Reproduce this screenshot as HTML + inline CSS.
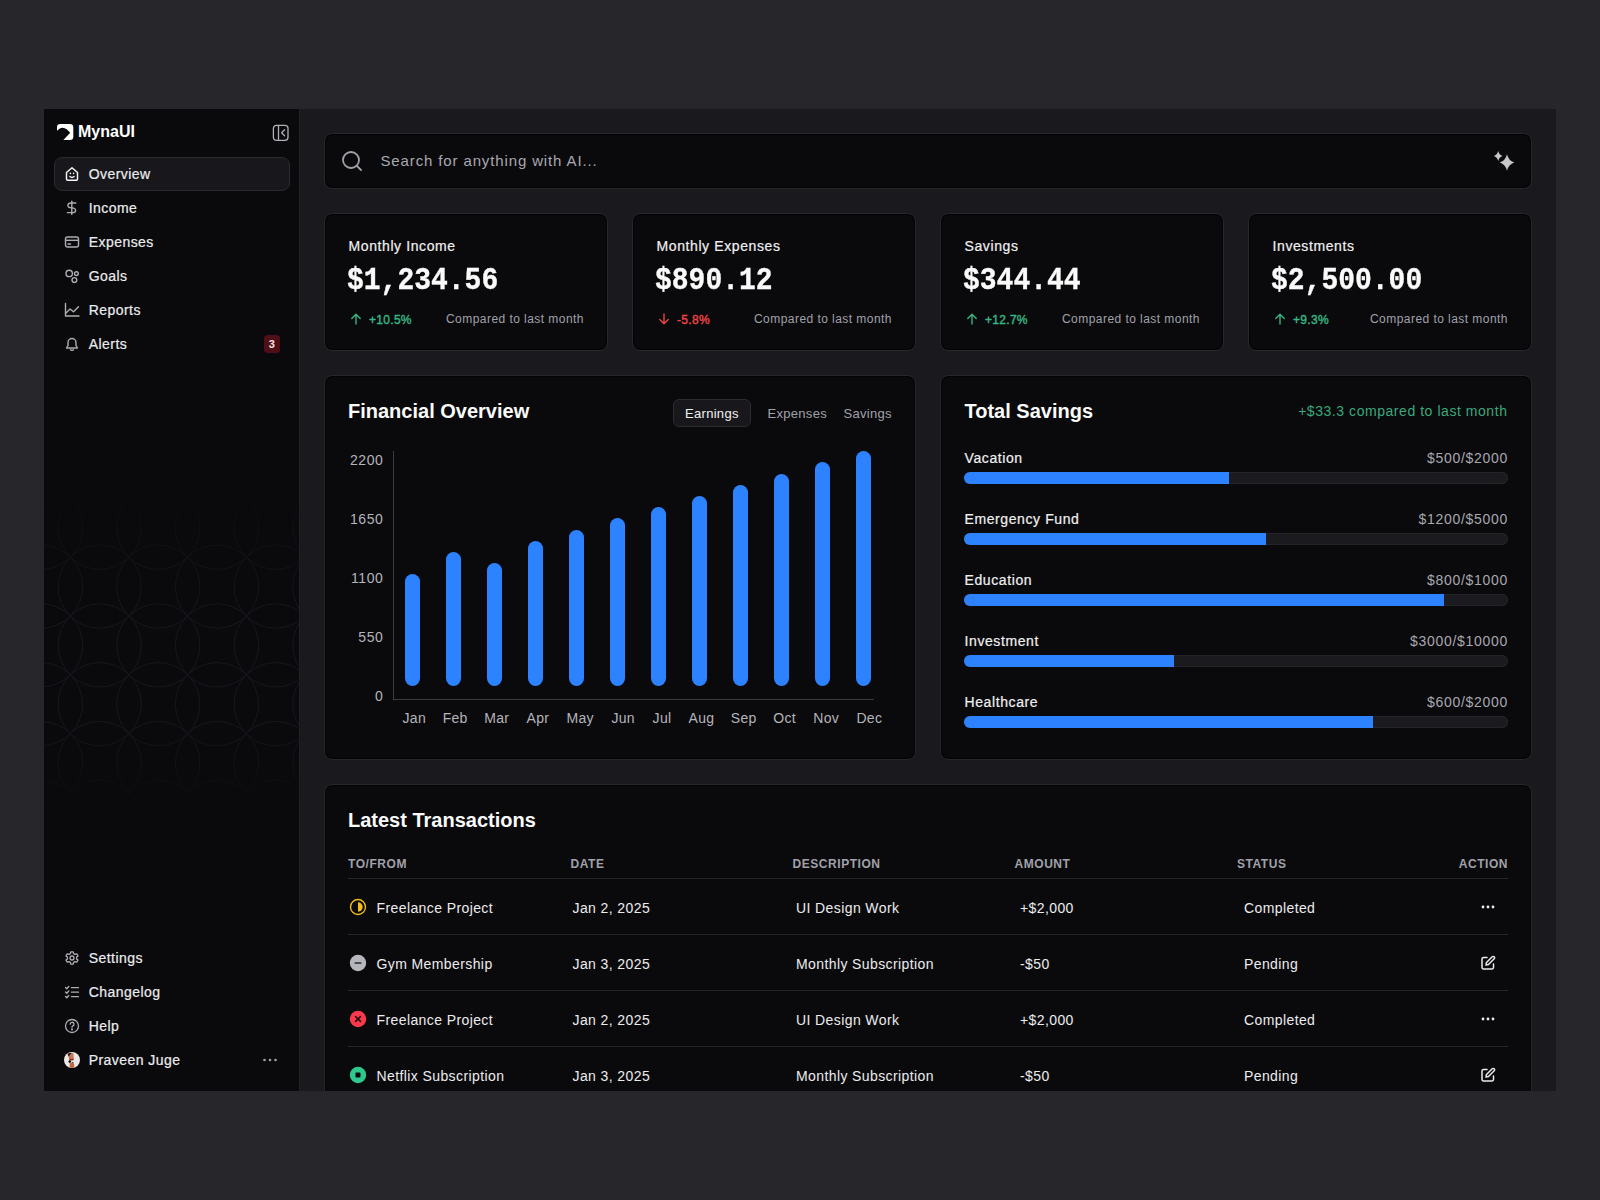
<!DOCTYPE html>
<html><head><meta charset="utf-8">
<style>
html,body{margin:0;padding:0;}
body{width:1600px;height:1200px;overflow:hidden;background:#26262b;position:relative;font-family:"Liberation Sans",sans-serif;color:#f4f4f5;}
.frame{position:absolute;left:0;top:0;width:1600px;height:1200px;clip-path:inset(109px 44px 109px 44px);}
.abs{position:absolute;}
.t{position:absolute;white-space:nowrap;line-height:1;}
.mono{font-family:"Liberation Mono",monospace;}
.side{position:absolute;left:44px;top:109px;width:255px;height:982px;background:#0a0a0d;border-right:1px solid #1f1f23;}
.main{position:absolute;left:300px;top:109px;width:1256px;height:982px;background:#1a1a1e;}
.card{position:absolute;box-sizing:border-box;background:#0a0a0c;border:1px solid #27272b;border-radius:8px;box-shadow:inset 0 0 1px 1px #040406;}
.nav{font-size:14px;color:#ececef;letter-spacing:0.45px;-webkit-text-stroke:0.2px #ececef;}
.med{-webkit-text-stroke:0.2px currentColor;}
.ico{position:absolute;}
</style></head>
<body>
<div class="frame">
  <div class="side"></div>
  <div class="main"></div>

  <svg class="abs" style="left:44px;top:0px" width="255" height="1200" viewBox="44 0 255 1200">
    <defs><linearGradient id="fade" x1="0" y1="0" x2="0" y2="1200" gradientUnits="userSpaceOnUse">
      <stop offset="0.3958" stop-color="#fff" stop-opacity="0"/>
      <stop offset="0.5083" stop-color="#fff" stop-opacity="1"/>
      <stop offset="0.6042" stop-color="#fff" stop-opacity="1"/>
      <stop offset="0.6792" stop-color="#fff" stop-opacity="0"/>
    </linearGradient>
    <mask id="m"><rect x="44" y="0" width="255" height="1200" fill="url(#fade)"/></mask></defs>
    <g mask="url(#m)" fill="none" stroke="#17181f" stroke-width="1"><circle cx="41.0" cy="410.2" r="41.6"/><circle cx="99.7" cy="410.2" r="41.6"/><circle cx="158.3" cy="410.2" r="41.6"/><circle cx="217.0" cy="410.2" r="41.6"/><circle cx="275.7" cy="410.2" r="41.6"/><circle cx="334.4" cy="410.2" r="41.6"/><circle cx="41.0" cy="469.0" r="41.6"/><circle cx="99.7" cy="469.0" r="41.6"/><circle cx="158.3" cy="469.0" r="41.6"/><circle cx="217.0" cy="469.0" r="41.6"/><circle cx="275.7" cy="469.0" r="41.6"/><circle cx="334.4" cy="469.0" r="41.6"/><circle cx="41.0" cy="527.8" r="41.6"/><circle cx="99.7" cy="527.8" r="41.6"/><circle cx="158.3" cy="527.8" r="41.6"/><circle cx="217.0" cy="527.8" r="41.6"/><circle cx="275.7" cy="527.8" r="41.6"/><circle cx="334.4" cy="527.8" r="41.6"/><circle cx="41.0" cy="586.6" r="41.6"/><circle cx="99.7" cy="586.6" r="41.6"/><circle cx="158.3" cy="586.6" r="41.6"/><circle cx="217.0" cy="586.6" r="41.6"/><circle cx="275.7" cy="586.6" r="41.6"/><circle cx="334.4" cy="586.6" r="41.6"/><circle cx="41.0" cy="645.4" r="41.6"/><circle cx="99.7" cy="645.4" r="41.6"/><circle cx="158.3" cy="645.4" r="41.6"/><circle cx="217.0" cy="645.4" r="41.6"/><circle cx="275.7" cy="645.4" r="41.6"/><circle cx="334.4" cy="645.4" r="41.6"/><circle cx="41.0" cy="704.2" r="41.6"/><circle cx="99.7" cy="704.2" r="41.6"/><circle cx="158.3" cy="704.2" r="41.6"/><circle cx="217.0" cy="704.2" r="41.6"/><circle cx="275.7" cy="704.2" r="41.6"/><circle cx="334.4" cy="704.2" r="41.6"/><circle cx="41.0" cy="763.0" r="41.6"/><circle cx="99.7" cy="763.0" r="41.6"/><circle cx="158.3" cy="763.0" r="41.6"/><circle cx="217.0" cy="763.0" r="41.6"/><circle cx="275.7" cy="763.0" r="41.6"/><circle cx="334.4" cy="763.0" r="41.6"/><circle cx="41.0" cy="821.8" r="41.6"/><circle cx="99.7" cy="821.8" r="41.6"/><circle cx="158.3" cy="821.8" r="41.6"/><circle cx="217.0" cy="821.8" r="41.6"/><circle cx="275.7" cy="821.8" r="41.6"/><circle cx="334.4" cy="821.8" r="41.6"/><circle cx="41.0" cy="880.6" r="41.6"/><circle cx="99.7" cy="880.6" r="41.6"/><circle cx="158.3" cy="880.6" r="41.6"/><circle cx="217.0" cy="880.6" r="41.6"/><circle cx="275.7" cy="880.6" r="41.6"/><circle cx="334.4" cy="880.6" r="41.6"/><circle cx="41.0" cy="939.4" r="41.6"/><circle cx="99.7" cy="939.4" r="41.6"/><circle cx="158.3" cy="939.4" r="41.6"/><circle cx="217.0" cy="939.4" r="41.6"/><circle cx="275.7" cy="939.4" r="41.6"/><circle cx="334.4" cy="939.4" r="41.6"/></g>
  </svg>
  <svg class="ico" style="left:57px;top:124.3px" width="17" height="17" viewBox="0 0 17 17">
    <path d="M3.3 0 H12.9 A3.4 3.4 0 0 1 16.3 3.4 V12.8 A3.3 3.3 0 0 1 13 16.1 H6.4 L13.2 8.7 C10.6 5.4 6.8 2.3 2.8 4.4 L0 6.7 V3.3 A3.3 3.3 0 0 1 3.3 0 Z" fill="#fff"/>
  </svg>
<div class="t" style="left:78px;top:124.26px;font-size:16px;font-weight:700;color:#fff;">MynaUI</div>
  <svg class="ico" style="left:272px;top:123.5px" width="17" height="18" viewBox="0 0 17 18" fill="none" stroke="#b0b0b6" stroke-width="1.3" stroke-linecap="round" stroke-linejoin="round">
    <rect x="1.4" y="1.3" width="14.6" height="15" rx="3"/>
    <line x1="6.5" y1="1.3" x2="6.5" y2="16.3"/>
    <path d="M12.6 5.8 L9.6 8.8 L12.6 11.8"/>
  </svg>
  <div class="abs" style="left:54px;top:157px;width:236px;height:34px;box-sizing:border-box;background:#18181c;border:1px solid #2a2a2f;border-radius:8px;"></div>
  <svg class="ico" style="left:64px;top:166px" width="16" height="16" viewBox="0 0 16 16" fill="none" stroke="#f4f4f5" stroke-width="1.5" stroke-linejoin="round">
    <path d="M2.5 6.5 L8 1.8 L13.5 6.5 V13 A1.2 1.2 0 0 1 12.3 14.2 H3.7 A1.2 1.2 0 0 1 2.5 13 Z"/>
    <path d="M5.9 10.5 Q8 12.3 10.1 10.5" stroke-linecap="round" stroke-width="1.4"/>
    <circle cx="6.4" cy="7.4" r="0.8" fill="#f4f4f5" stroke="none"/><circle cx="9.6" cy="7.4" r="0.8" fill="#f4f4f5" stroke="none"/></svg>
  <div class="t nav" style="left:88.7px;top:167.15px;">Overview</div>
  <svg class="ico" style="left:64px;top:200px" width="16" height="16" viewBox="0 0 16 16" fill="none" stroke="#adadb3" stroke-width="1.4" stroke-linecap="round">
    <path d="M11.8 3 H7.2 Q3.9 3 3.9 5.4 Q3.9 7.6 7.8 7.9 Q11.6 8.2 11.6 10.4 Q11.6 12.6 8.2 12.6 H3.4"/>
    <line x1="7.8" y1="1.3" x2="7.8" y2="14.4"/></svg>
  <div class="t nav" style="left:88.7px;top:201.15px;">Income</div>
  <svg class="ico" style="left:64px;top:234px" width="16" height="16" viewBox="0 0 16 16" fill="none" stroke="#adadb3" stroke-width="1.4">
    <rect x="1.5" y="3" width="13" height="10" rx="2"/>
    <line x1="1.5" y1="6.3" x2="14.5" y2="6.3"/>
    <line x1="4" y1="10" x2="6.5" y2="10" stroke-linecap="round"/></svg>
  <div class="t nav" style="left:88.7px;top:235.15px;">Expenses</div>
  <svg class="ico" style="left:64px;top:268px" width="16" height="16" viewBox="0 0 16 16" fill="none" stroke="#adadb3" stroke-width="1.4">
    <circle cx="5.2" cy="5.4" r="3.2"/>
    <circle cx="12.4" cy="5.6" r="1.9"/>
    <circle cx="10.4" cy="12" r="2.4"/></svg>
  <div class="t nav" style="left:88.7px;top:269.15px;">Goals</div>
  <svg class="ico" style="left:64px;top:302px" width="16" height="16" viewBox="0 0 16 16" fill="none" stroke="#adadb3" stroke-width="1.4" stroke-linecap="round" stroke-linejoin="round">
    <path d="M1.5 1.5 V14 H15"/>
    <path d="M1.5 11.5 L6 7 L9.5 9.8 L14.5 4.8"/></svg>
  <div class="t nav" style="left:88.7px;top:303.15px;">Reports</div>
  <svg class="ico" style="left:64px;top:336px" width="16" height="16" viewBox="0 0 16 16" fill="none" stroke="#adadb3" stroke-width="1.4" stroke-linejoin="round">
    <path d="M4 6.5 A4 4 0 0 1 12 6.5 V9.5 L13.5 12 H2.5 L4 9.5 Z"/>
    <path d="M6.3 13.2 A1.8 1.8 0 0 0 9.7 13.2"/></svg>
  <div class="t nav" style="left:88.7px;top:337.15px;">Alerts</div>
  <svg class="ico" style="left:64px;top:950.3px" width="16" height="16" viewBox="0 0 16 16" fill="none" stroke="#adadb3" stroke-width="1.3" stroke-linejoin="round">
    <path d="M6.8 1.8 H9.2 L9.6 3.6 L11 4.4 L12.8 3.8 L14 5.9 L12.6 7.1 V8.9 L14 10.1 L12.8 12.2 L11 11.6 L9.6 12.4 L9.2 14.2 H6.8 L6.4 12.4 L5 11.6 L3.2 12.2 L2 10.1 L3.4 8.9 V7.1 L2 5.9 L3.2 3.8 L5 4.4 L6.4 3.6 Z"/>
    <circle cx="8" cy="8" r="2"/></svg>
  <div class="t nav" style="left:88.7px;top:951.45px;">Settings</div>
  <svg class="ico" style="left:64px;top:984.3px" width="16" height="16" viewBox="0 0 16 16" fill="none" stroke="#adadb3" stroke-width="1.3" stroke-linecap="round" stroke-linejoin="round">
    <path d="M1.5 3.5 L2.8 4.8 L4.8 2.5"/><path d="M1.5 8 L2.8 9.3 L4.8 7"/><path d="M1.5 12.5 L2.8 13.8 L4.8 11.5"/>
    <line x1="7.5" y1="3.7" x2="14.5" y2="3.7"/><line x1="7.5" y1="8.2" x2="14.5" y2="8.2"/><line x1="7.5" y1="12.7" x2="14.5" y2="12.7"/></svg>
  <div class="t nav" style="left:88.7px;top:985.45px;">Changelog</div>
  <svg class="ico" style="left:64px;top:1018.3px" width="16" height="16" viewBox="0 0 16 16" fill="none" stroke="#adadb3" stroke-width="1.3" stroke-linecap="round">
    <circle cx="8" cy="8" r="6.5"/>
    <path d="M6.2 6.2 A1.9 1.9 0 1 1 8.6 8 Q8 8.3 8 9.3"/>
    <circle cx="8" cy="11.4" r="0.4" fill="#a1a1aa"/></svg>
  <div class="t nav" style="left:88.7px;top:1019.45px;">Help</div>
  <svg class="ico" style="left:64px;top:1052.3px" width="16" height="16" viewBox="0 0 16 16">
    <defs><clipPath id="av"><circle cx="8" cy="8" r="8"/></clipPath></defs>
    <g clip-path="url(#av)"><rect width="16" height="16" fill="#ece6e4"/>
    <path d="M4.5 1.5 Q7 0 9.5 1.5 L9.8 6.5 Q8 8.2 5.5 7.5 Q4 5 4.5 1.5 Z" fill="#c47a58"/>
    <path d="M3.5 2.5 Q5 0.5 7.5 1.2 Q5.5 2.5 5 4.8 Z" fill="#2a140c"/>
    <path d="M5.2 6.3 Q7.5 7.6 9.8 6.3 L9.6 8 Q7.5 9 5.4 8 Z" fill="#8c3118"/>
    <circle cx="5.8" cy="9.6" r="1.3" fill="#0d0a08"/><circle cx="8.6" cy="10.8" r="0.9" fill="#3b2a14"/>
    <path d="M5.8 11 Q8 10.5 10 11.5 L10.5 16 H5.5 Z" fill="#c06a45"/></g></svg>
  <div class="t nav" style="left:88.7px;top:1053.45px;">Praveen Juge</div>
  <div class="abs" style="left:263.5px;top:335.2px;width:16.5px;height:17.5px;border-radius:3.5px;background:#4e0f16;color:#fbe4e4;font-size:11px;font-weight:700;line-height:18px;text-align:center;">3</div>
  <svg class="ico" style="left:262px;top:1057px" width="16" height="6" viewBox="0 0 16 6" fill="#a1a1aa">
    <circle cx="2.5" cy="3" r="1.3"/><circle cx="8" cy="3" r="1.3"/><circle cx="13.5" cy="3" r="1.3"/></svg>
  <div class="card" style="left:324px;top:133px;width:1208px;height:56px;"></div>
  <svg class="ico" style="left:341px;top:150px" width="22" height="22" viewBox="0 0 22 22" fill="none" stroke="#a1a1aa" stroke-width="1.8" stroke-linecap="round">
    <circle cx="10" cy="10" r="8"/><line x1="16" y1="16" x2="20" y2="20"/></svg>
  <div class="t" style="left:380.5px;top:152.7px;font-size:15px;color:#a8a8b0;letter-spacing:0.87px;">Search for anything with AI...</div>
  <svg class="ico" style="left:1490px;top:148px" width="28" height="26" viewBox="1490 148 28 26" fill="#c6c6cb">
    <path d="M1507 154.2 Q1508.58 160.67 1514.2 162.5 Q1508.58 164.33 1507 170.8 Q1505.42 164.33 1499.8 162.5 Q1505.42 160.67 1507 154.2 Z"/><path d="M1498.2 150.9 Q1499.17 154.88 1502.6000000000001 156 Q1499.17 157.12 1498.2 161.1 Q1497.23 157.12 1493.8 156 Q1497.23 154.88 1498.2 150.9 Z"/></svg>
  <div class="card" style="left:324px;top:213px;width:284px;height:138px;"></div>
  <div class="t" style="left:348.5px;top:239.15px;font-size:14px;color:#f0f0f2;letter-spacing:0.6px;-webkit-text-stroke:0.2px #f0f0f2;">Monthly Income</div>
  <div class="t mono" style="left:347px;top:267.54px;font-size:28px;font-weight:700;color:#fafafa;transform:scaleY(1.14);transform-origin:0 21.46px;-webkit-text-stroke:0.35px #fafafa;">$1,234.56</div>
  <svg class="ico" style="left:350px;top:313px" width="12" height="12" viewBox="0 0 12 12" fill="none" stroke="#38b585" stroke-width="1.4" stroke-linecap="round" stroke-linejoin="round"><path d="M6 11 V1.5 M1.8 5.5 L6 1.3 L10.2 5.5"/></svg>
  <div class="t" style="left:369px;top:313.84px;font-size:12px;color:#38b585;letter-spacing:0.3px;-webkit-text-stroke:0.4px #38b585;">+10.5%</div>
  <div class="t" style="left:446px;top:313.34px;font-size:12px;color:#a1a1aa;letter-spacing:0.45px;">Compared to last month</div>
  <div class="card" style="left:632px;top:213px;width:284px;height:138px;"></div>
  <div class="t" style="left:656.5px;top:239.15px;font-size:14px;color:#f0f0f2;letter-spacing:0.6px;-webkit-text-stroke:0.2px #f0f0f2;">Monthly Expenses</div>
  <div class="t mono" style="left:655px;top:267.54px;font-size:28px;font-weight:700;color:#fafafa;transform:scaleY(1.14);transform-origin:0 21.46px;-webkit-text-stroke:0.35px #fafafa;">$890.12</div>
  <svg class="ico" style="left:658px;top:313px" width="12" height="12" viewBox="0 0 12 12" fill="none" stroke="#ef4444" stroke-width="1.4" stroke-linecap="round" stroke-linejoin="round"><path d="M6 1 V10.5 M1.8 6.5 L6 10.7 L10.2 6.5"/></svg>
  <div class="t" style="left:677px;top:313.84px;font-size:12px;color:#ef4444;letter-spacing:0.3px;-webkit-text-stroke:0.4px #ef4444;">-5.8%</div>
  <div class="t" style="left:754px;top:313.34px;font-size:12px;color:#a1a1aa;letter-spacing:0.45px;">Compared to last month</div>
  <div class="card" style="left:940px;top:213px;width:284px;height:138px;"></div>
  <div class="t" style="left:964.5px;top:239.15px;font-size:14px;color:#f0f0f2;letter-spacing:0.6px;-webkit-text-stroke:0.2px #f0f0f2;">Savings</div>
  <div class="t mono" style="left:963px;top:267.54px;font-size:28px;font-weight:700;color:#fafafa;transform:scaleY(1.14);transform-origin:0 21.46px;-webkit-text-stroke:0.35px #fafafa;">$344.44</div>
  <svg class="ico" style="left:966px;top:313px" width="12" height="12" viewBox="0 0 12 12" fill="none" stroke="#38b585" stroke-width="1.4" stroke-linecap="round" stroke-linejoin="round"><path d="M6 11 V1.5 M1.8 5.5 L6 1.3 L10.2 5.5"/></svg>
  <div class="t" style="left:985px;top:313.84px;font-size:12px;color:#38b585;letter-spacing:0.3px;-webkit-text-stroke:0.4px #38b585;">+12.7%</div>
  <div class="t" style="left:1062px;top:313.34px;font-size:12px;color:#a1a1aa;letter-spacing:0.45px;">Compared to last month</div>
  <div class="card" style="left:1248px;top:213px;width:284px;height:138px;"></div>
  <div class="t" style="left:1272.5px;top:239.15px;font-size:14px;color:#f0f0f2;letter-spacing:0.6px;-webkit-text-stroke:0.2px #f0f0f2;">Investments</div>
  <div class="t mono" style="left:1271px;top:267.54px;font-size:28px;font-weight:700;color:#fafafa;transform:scaleY(1.14);transform-origin:0 21.46px;-webkit-text-stroke:0.35px #fafafa;">$2,500.00</div>
  <svg class="ico" style="left:1274px;top:313px" width="12" height="12" viewBox="0 0 12 12" fill="none" stroke="#38b585" stroke-width="1.4" stroke-linecap="round" stroke-linejoin="round"><path d="M6 11 V1.5 M1.8 5.5 L6 1.3 L10.2 5.5"/></svg>
  <div class="t" style="left:1293px;top:313.84px;font-size:12px;color:#38b585;letter-spacing:0.3px;-webkit-text-stroke:0.4px #38b585;">+9.3%</div>
  <div class="t" style="left:1370px;top:313.34px;font-size:12px;color:#a1a1aa;letter-spacing:0.45px;">Compared to last month</div>
  <div class="card" style="left:324px;top:375px;width:592px;height:385px;"></div>
  <div class="t" style="left:348px;top:401.27px;font-size:20px;font-weight:700;color:#fafafa;">Financial Overview</div>
  <div class="abs" style="left:673px;top:399px;width:78px;height:28px;box-sizing:border-box;background:#18181c;border:1px solid #2a2a2f;border-radius:6px;"></div>
  <div class="t" style="left:685px;top:406.8px;font-size:13px;color:#f0f0f2;letter-spacing:0.3px;">Earnings</div>
  <div class="t" style="left:767.5px;top:406.8px;font-size:13px;color:#a1a1aa;letter-spacing:0.3px;">Expenses</div>
  <div class="t" style="left:843.5px;top:406.8px;font-size:13px;color:#a1a1aa;letter-spacing:0.3px;">Savings</div>
  <div class="t" style="right:1216.5px;top:453.15px;font-size:14px;color:#b4b4bb;letter-spacing:0.6px;">2200</div>
  <div class="t" style="right:1216.5px;top:512.15px;font-size:14px;color:#b4b4bb;letter-spacing:0.6px;">1650</div>
  <div class="t" style="right:1216.5px;top:571.15px;font-size:14px;color:#b4b4bb;letter-spacing:0.6px;">1100</div>
  <div class="t" style="right:1216.5px;top:630.15px;font-size:14px;color:#b4b4bb;letter-spacing:0.6px;">550</div>
  <div class="t" style="right:1216.5px;top:689.15px;font-size:14px;color:#b4b4bb;letter-spacing:0.6px;">0</div>
  <div class="abs" style="left:393px;top:451px;width:1px;height:248px;background:#3a3a40;"></div>
  <div class="abs" style="left:393px;top:699px;width:481px;height:1px;background:#3a3a40;"></div>
  <div class="abs" style="left:405.0px;top:574px;width:15px;height:112px;border-radius:7.5px;background:#2c82ff;"></div>
  <div class="t" style="left:384.3px;width:60px;text-align:center;top:711.15px;font-size:14px;color:#b4b4bb;letter-spacing:0.3px;">Jan</div>
  <div class="abs" style="left:446.0px;top:552px;width:15px;height:134px;border-radius:7.5px;background:#2c82ff;"></div>
  <div class="t" style="left:425.2px;width:60px;text-align:center;top:711.15px;font-size:14px;color:#b4b4bb;letter-spacing:0.3px;">Feb</div>
  <div class="abs" style="left:487.0px;top:563px;width:15px;height:123px;border-radius:7.5px;background:#2c82ff;"></div>
  <div class="t" style="left:466.8px;width:60px;text-align:center;top:711.15px;font-size:14px;color:#b4b4bb;letter-spacing:0.3px;">Mar</div>
  <div class="abs" style="left:528.0px;top:541px;width:15px;height:145px;border-radius:7.5px;background:#2c82ff;"></div>
  <div class="t" style="left:507.9px;width:60px;text-align:center;top:711.15px;font-size:14px;color:#b4b4bb;letter-spacing:0.3px;">Apr</div>
  <div class="abs" style="left:569.0px;top:530px;width:15px;height:156px;border-radius:7.5px;background:#2c82ff;"></div>
  <div class="t" style="left:550.2px;width:60px;text-align:center;top:711.15px;font-size:14px;color:#b4b4bb;letter-spacing:0.3px;">May</div>
  <div class="abs" style="left:610.0px;top:518px;width:15px;height:168px;border-radius:7.5px;background:#2c82ff;"></div>
  <div class="t" style="left:593.2px;width:60px;text-align:center;top:711.15px;font-size:14px;color:#b4b4bb;letter-spacing:0.3px;">Jun</div>
  <div class="abs" style="left:651.0px;top:507px;width:15px;height:179px;border-radius:7.5px;background:#2c82ff;"></div>
  <div class="t" style="left:632px;width:60px;text-align:center;top:711.15px;font-size:14px;color:#b4b4bb;letter-spacing:0.3px;">Jul</div>
  <div class="abs" style="left:692.0px;top:496px;width:15px;height:190px;border-radius:7.5px;background:#2c82ff;"></div>
  <div class="t" style="left:671.5px;width:60px;text-align:center;top:711.15px;font-size:14px;color:#b4b4bb;letter-spacing:0.3px;">Aug</div>
  <div class="abs" style="left:733.0px;top:485px;width:15px;height:201px;border-radius:7.5px;background:#2c82ff;"></div>
  <div class="t" style="left:713.7px;width:60px;text-align:center;top:711.15px;font-size:14px;color:#b4b4bb;letter-spacing:0.3px;">Sep</div>
  <div class="abs" style="left:774.0px;top:474px;width:15px;height:212px;border-radius:7.5px;background:#2c82ff;"></div>
  <div class="t" style="left:754.6px;width:60px;text-align:center;top:711.15px;font-size:14px;color:#b4b4bb;letter-spacing:0.3px;">Oct</div>
  <div class="abs" style="left:815.0px;top:462px;width:15px;height:224px;border-radius:7.5px;background:#2c82ff;"></div>
  <div class="t" style="left:796.2px;width:60px;text-align:center;top:711.15px;font-size:14px;color:#b4b4bb;letter-spacing:0.3px;">Nov</div>
  <div class="abs" style="left:856.0px;top:451px;width:15px;height:235px;border-radius:7.5px;background:#2c82ff;"></div>
  <div class="t" style="left:839.3px;width:60px;text-align:center;top:711.15px;font-size:14px;color:#b4b4bb;letter-spacing:0.3px;">Dec</div>
  <div class="card" style="left:940px;top:375px;width:592px;height:385px;"></div>
  <div class="t" style="left:964.5px;top:401.17px;font-size:20px;font-weight:700;color:#fafafa;">Total Savings</div>
  <div class="t" style="right:92.5px;top:403.85px;font-size:14px;color:#3aa87c;letter-spacing:0.55px;">+$33.3 compared to last month</div>
  <div class="t" style="left:964.5px;top:451.35px;font-size:14px;color:#f0f0f2;letter-spacing:0.6px;-webkit-text-stroke:0.2px #f0f0f2;">Vacation</div>
  <div class="t" style="right:92px;top:451.35px;font-size:14px;color:#a8a8b0;letter-spacing:0.7px;">$500/$2000</div>
  <div class="abs" style="left:964px;top:472px;width:544px;height:12px;border-radius:6px;background:#1b1b1f;box-shadow:inset 0 0 0 1px #242428;overflow:hidden;"><div class="abs" style="left:0;top:0;height:12px;width:265.25px;background:#2c82ff;"></div></div>
  <div class="t" style="left:964.5px;top:512.35px;font-size:14px;color:#f0f0f2;letter-spacing:0.6px;-webkit-text-stroke:0.2px #f0f0f2;">Emergency Fund</div>
  <div class="t" style="right:92px;top:512.35px;font-size:14px;color:#a8a8b0;letter-spacing:0.7px;">$1200/$5000</div>
  <div class="abs" style="left:964px;top:533px;width:544px;height:12px;border-radius:6px;background:#1b1b1f;box-shadow:inset 0 0 0 1px #242428;overflow:hidden;"><div class="abs" style="left:0;top:0;height:12px;width:302.25px;background:#2c82ff;"></div></div>
  <div class="t" style="left:964.5px;top:573.35px;font-size:14px;color:#f0f0f2;letter-spacing:0.6px;-webkit-text-stroke:0.2px #f0f0f2;">Education</div>
  <div class="t" style="right:92px;top:573.35px;font-size:14px;color:#a8a8b0;letter-spacing:0.7px;">$800/$1000</div>
  <div class="abs" style="left:964px;top:594px;width:544px;height:12px;border-radius:6px;background:#1b1b1f;box-shadow:inset 0 0 0 1px #242428;overflow:hidden;"><div class="abs" style="left:0;top:0;height:12px;width:480.25px;background:#2c82ff;"></div></div>
  <div class="t" style="left:964.5px;top:634.35px;font-size:14px;color:#f0f0f2;letter-spacing:0.6px;-webkit-text-stroke:0.2px #f0f0f2;">Investment</div>
  <div class="t" style="right:92px;top:634.35px;font-size:14px;color:#a8a8b0;letter-spacing:0.7px;">$3000/$10000</div>
  <div class="abs" style="left:964px;top:655px;width:544px;height:12px;border-radius:6px;background:#1b1b1f;box-shadow:inset 0 0 0 1px #242428;overflow:hidden;"><div class="abs" style="left:0;top:0;height:12px;width:210.25px;background:#2c82ff;"></div></div>
  <div class="t" style="left:964.5px;top:695.35px;font-size:14px;color:#f0f0f2;letter-spacing:0.6px;-webkit-text-stroke:0.2px #f0f0f2;">Healthcare</div>
  <div class="t" style="right:92px;top:695.35px;font-size:14px;color:#a8a8b0;letter-spacing:0.7px;">$600/$2000</div>
  <div class="abs" style="left:964px;top:716px;width:544px;height:12px;border-radius:6px;background:#1b1b1f;box-shadow:inset 0 0 0 1px #242428;overflow:hidden;"><div class="abs" style="left:0;top:0;height:12px;width:409px;background:#2c82ff;"></div></div>
  <div class="card" style="left:324px;top:784px;width:1208px;height:400px;"></div>
  <div class="t" style="left:348px;top:810.27px;font-size:20px;font-weight:700;color:#fafafa;">Latest Transactions</div>
  <div class="t" style="left:348px;top:857.84px;font-size:12px;font-weight:700;color:#a1a1aa;letter-spacing:0.55px;">TO/FROM</div>
  <div class="t" style="left:570.5px;top:857.84px;font-size:12px;font-weight:700;color:#a1a1aa;letter-spacing:0.55px;">DATE</div>
  <div class="t" style="left:792.5px;top:857.84px;font-size:12px;font-weight:700;color:#a1a1aa;letter-spacing:0.55px;">DESCRIPTION</div>
  <div class="t" style="left:1014.5px;top:857.84px;font-size:12px;font-weight:700;color:#a1a1aa;letter-spacing:0.55px;">AMOUNT</div>
  <div class="t" style="left:1237px;top:857.84px;font-size:12px;font-weight:700;color:#a1a1aa;letter-spacing:0.55px;">STATUS</div>
  <div class="t" style="right:92px;top:857.84px;font-size:12px;font-weight:700;color:#a1a1aa;letter-spacing:0.55px;">ACTION</div>
  <div class="abs" style="left:348px;top:878px;width:1160px;height:1px;background:#26262a;"></div>
  <div class="abs" style="left:348px;top:934px;width:1160px;height:1px;background:#26262a;"></div>
  <div class="abs" style="left:348px;top:990px;width:1160px;height:1px;background:#26262a;"></div>
  <div class="abs" style="left:348px;top:1046px;width:1160px;height:1px;background:#26262a;"></div>
  <svg class="ico" style="left:349px;top:898px" width="18" height="18" viewBox="0 0 18 18"><circle cx="9" cy="9" r="7.5" fill="none" stroke="#efbb1a" stroke-width="1.4"/><path d="M9 4.3 A4.7 4.7 0 0 1 9 13.7 Z" fill="#f2be1c"/></svg>
  <div class="t" style="left:376.5px;top:900.65px;font-size:14px;color:#ececef;letter-spacing:0.4px;">Freelance Project</div>
  <div class="t" style="left:572.5px;top:900.65px;font-size:14px;color:#ececef;letter-spacing:0.4px;">Jan 2, 2025</div>
  <div class="t" style="left:796px;top:900.65px;font-size:14px;color:#ececef;letter-spacing:0.4px;">UI Design Work</div>
  <div class="t" style="left:1020px;top:900.65px;font-size:14px;color:#ececef;letter-spacing:0.4px;">+$2,000</div>
  <div class="t" style="left:1244px;top:900.65px;font-size:14px;color:#ececef;letter-spacing:0.4px;">Completed</div>
  <svg class="ico" style="left:1480px;top:904px" width="16" height="6" viewBox="0 0 16 6" fill="#ececef"><circle cx="3" cy="3" r="1.4"/><circle cx="8" cy="3" r="1.4"/><circle cx="13" cy="3" r="1.4"/></svg>
  <svg class="ico" style="left:349px;top:954px" width="18" height="18" viewBox="0 0 18 18"><circle cx="9" cy="9" r="8.2" fill="#b6b6bd"/><line x1="6.3" y1="9" x2="11.7" y2="9" stroke="#2a2a30" stroke-width="1.7" stroke-linecap="round"/></svg>
  <div class="t" style="left:376.5px;top:956.65px;font-size:14px;color:#ececef;letter-spacing:0.4px;">Gym Membership</div>
  <div class="t" style="left:572.5px;top:956.65px;font-size:14px;color:#ececef;letter-spacing:0.4px;">Jan 3, 2025</div>
  <div class="t" style="left:796px;top:956.65px;font-size:14px;color:#ececef;letter-spacing:0.4px;">Monthly Subscription</div>
  <div class="t" style="left:1020px;top:956.65px;font-size:14px;color:#ececef;letter-spacing:0.4px;">-$50</div>
  <div class="t" style="left:1244px;top:956.65px;font-size:14px;color:#ececef;letter-spacing:0.4px;">Pending</div>
  <svg class="ico" style="left:1480px;top:955px" width="16" height="16" viewBox="0 0 16 16" fill="none" stroke="#ececef" stroke-width="1.5" stroke-linecap="round" stroke-linejoin="round"><path d="M13.5 9 V12.5 A1.5 1.5 0 0 1 12 14 H3.5 A1.5 1.5 0 0 1 2 12.5 V4 A1.5 1.5 0 0 1 3.5 2.5 H7"/><path d="M12.2 1.8 A1.3 1.3 0 0 1 14.2 3.8 L8.5 9.5 L6 10 L6.5 7.5 Z"/></svg>
  <svg class="ico" style="left:349px;top:1010px" width="18" height="18" viewBox="0 0 18 18"><circle cx="9" cy="9" r="8.2" fill="#fa3a4c"/><path d="M6.6 6.6 L11.4 11.4 M11.4 6.6 L6.6 11.4" stroke="#2a0a0c" stroke-width="1.6" stroke-linecap="round"/></svg>
  <div class="t" style="left:376.5px;top:1012.65px;font-size:14px;color:#ececef;letter-spacing:0.4px;">Freelance Project</div>
  <div class="t" style="left:572.5px;top:1012.65px;font-size:14px;color:#ececef;letter-spacing:0.4px;">Jan 2, 2025</div>
  <div class="t" style="left:796px;top:1012.65px;font-size:14px;color:#ececef;letter-spacing:0.4px;">UI Design Work</div>
  <div class="t" style="left:1020px;top:1012.65px;font-size:14px;color:#ececef;letter-spacing:0.4px;">+$2,000</div>
  <div class="t" style="left:1244px;top:1012.65px;font-size:14px;color:#ececef;letter-spacing:0.4px;">Completed</div>
  <svg class="ico" style="left:1480px;top:1016px" width="16" height="6" viewBox="0 0 16 6" fill="#ececef"><circle cx="3" cy="3" r="1.4"/><circle cx="8" cy="3" r="1.4"/><circle cx="13" cy="3" r="1.4"/></svg>
  <svg class="ico" style="left:349px;top:1066px" width="18" height="18" viewBox="0 0 18 18"><circle cx="9" cy="9" r="8.2" fill="#2ec88c"/><rect x="6.5" y="6.5" width="5" height="5" rx="0.9" fill="#0a0a0c"/></svg>
  <div class="t" style="left:376.5px;top:1068.65px;font-size:14px;color:#ececef;letter-spacing:0.4px;">Netflix Subscription</div>
  <div class="t" style="left:572.5px;top:1068.65px;font-size:14px;color:#ececef;letter-spacing:0.4px;">Jan 3, 2025</div>
  <div class="t" style="left:796px;top:1068.65px;font-size:14px;color:#ececef;letter-spacing:0.4px;">Monthly Subscription</div>
  <div class="t" style="left:1020px;top:1068.65px;font-size:14px;color:#ececef;letter-spacing:0.4px;">-$50</div>
  <div class="t" style="left:1244px;top:1068.65px;font-size:14px;color:#ececef;letter-spacing:0.4px;">Pending</div>
  <svg class="ico" style="left:1480px;top:1067px" width="16" height="16" viewBox="0 0 16 16" fill="none" stroke="#ececef" stroke-width="1.5" stroke-linecap="round" stroke-linejoin="round"><path d="M13.5 9 V12.5 A1.5 1.5 0 0 1 12 14 H3.5 A1.5 1.5 0 0 1 2 12.5 V4 A1.5 1.5 0 0 1 3.5 2.5 H7"/><path d="M12.2 1.8 A1.3 1.3 0 0 1 14.2 3.8 L8.5 9.5 L6 10 L6.5 7.5 Z"/></svg>
</div>
</body></html>
